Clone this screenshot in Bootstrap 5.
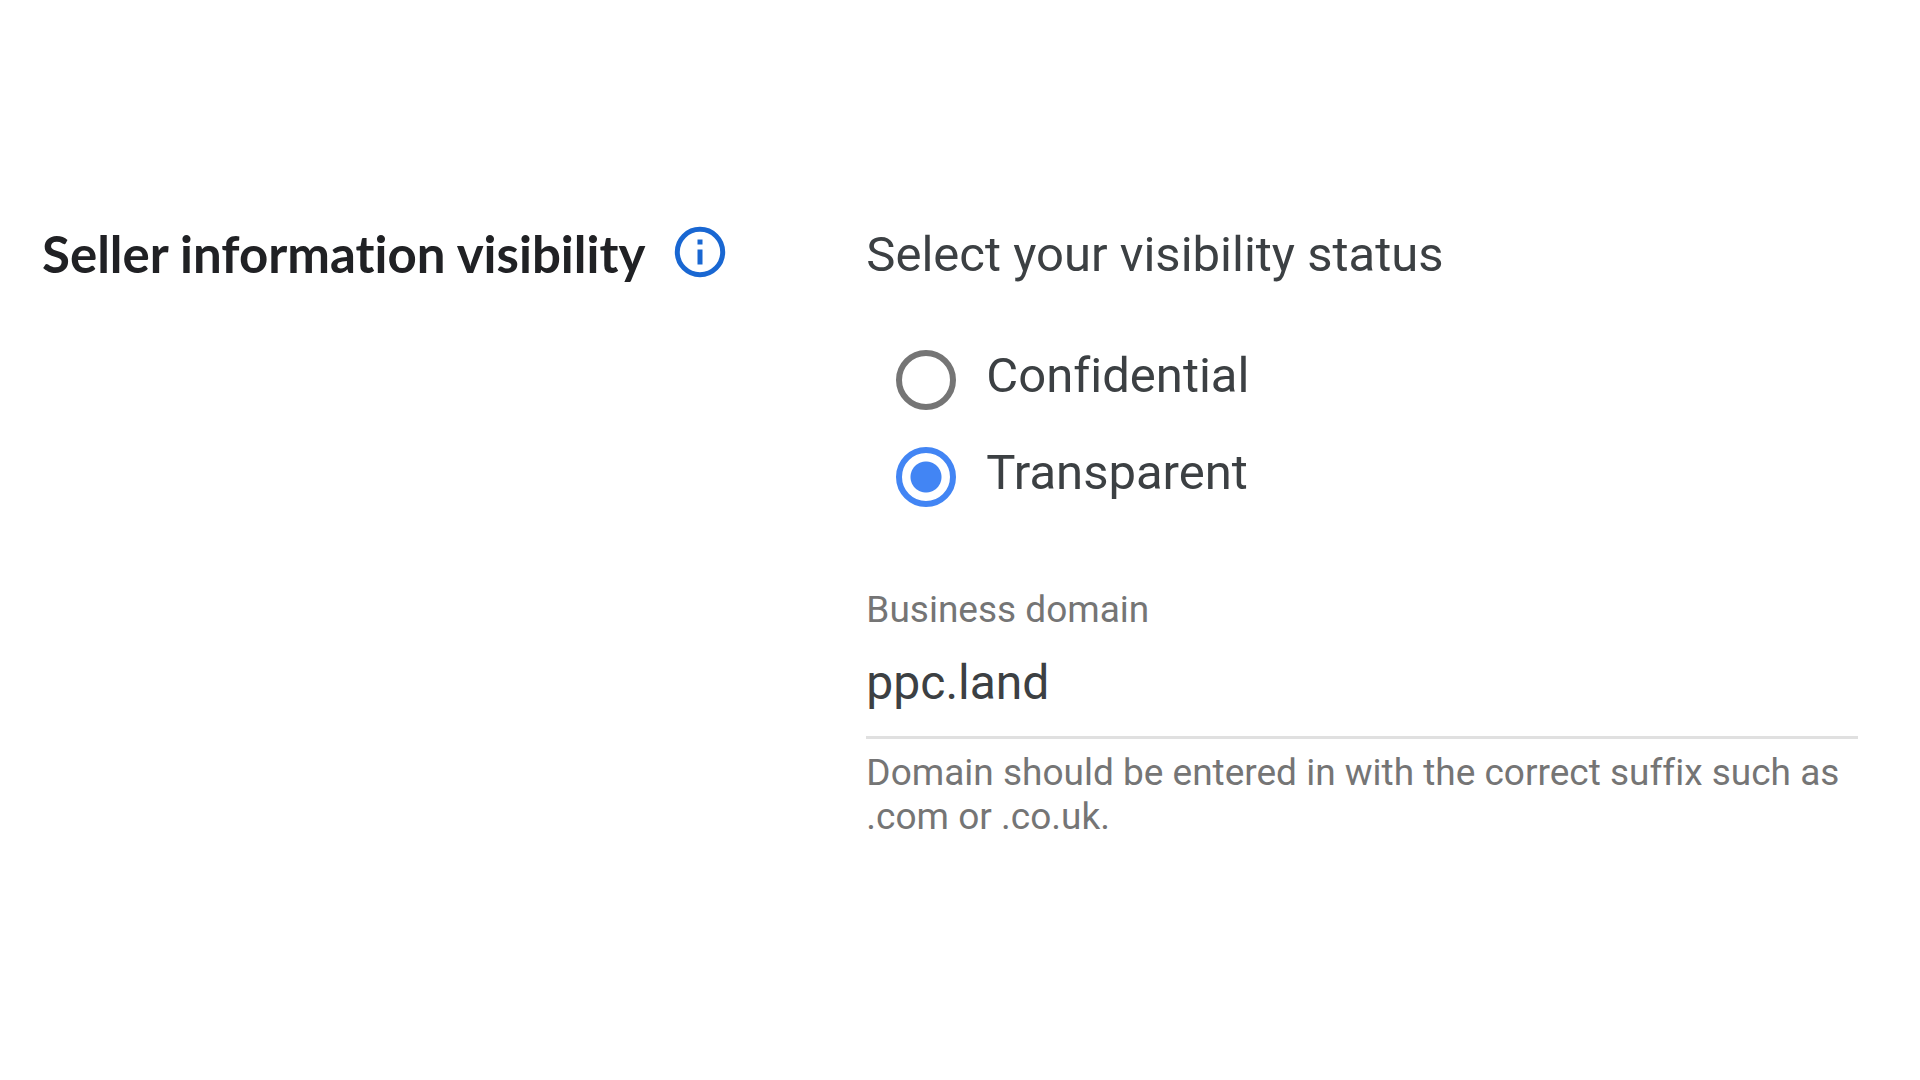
<!DOCTYPE html>
<html lang="en">
<head>
<meta charset="utf-8">
<meta name="viewport" content="width=device-width, initial-scale=1">
<title>Seller information visibility</title>
<link href="https://cdn.jsdelivr.net/npm/bootstrap@5.3.0/dist/css/bootstrap.min.css" rel="stylesheet">
<style>
  body { font-family: Roboto, "Liberation Sans", sans-serif; font-size: 49px; line-height: 60px; font-variant-ligatures: none; color: #3c4043; background: #fff; }
  .settings-row { display: grid; grid-template-columns: 5fr 6fr; padding: 224px 62px 40px 40px; }
  .settings-title { font-family: "Google Sans", Lato, sans-serif; font-size: 51px; line-height: 60px; font-weight: 700; color: #202124; }
  .title-line { gap: 27px; padding-left: 2px; }
  .info-btn { color: #1967d2; line-height: 0; }
  .status-legend { font-size: 49px; line-height: 62px; }
  .status-list { padding: 60px 0 0 30px; gap: 33px; }
  .status-option { gap: 30px; }
  .status-option .form-check-input { width: 60px; height: 60px; border: 6px solid #757575; margin: 4px 0 0; background-color: #fff; }
  .status-option .form-check-input:checked { border-color: #4285f4; background-color: #fff; background-image: radial-gradient(circle, #4285f4 15px, transparent 16px); background-size: auto; }
  .domain-field { padding-top: 81px; }
  .domain-label, .domain-help { font-size: 37px; line-height: 44px; color: #757575; }
  .domain-input { font-size: 48px; line-height: 60px; color: #3c4043; border-bottom: 3px solid #e0e0e0; padding: 20px 0 24px; height: 107px; }
  .domain-input:focus { box-shadow: none; color: #3c4043; border-color: #4285f4; }
  .domain-help { margin: 12px 0 0; }
  @media (max-width: 1199px) { .settings-row { grid-template-columns: 1fr; gap: 40px; padding: 40px; } }
</style>
<script src="https://cdn.jsdelivr.net/npm/bootstrap@5.3.0/dist/js/bootstrap.bundle.min.js"></script>
</head>
<body>
<main class="settings-row">
  <div class="title-line d-flex align-items-start">
    <h1 class="settings-title mb-0">Seller information visibility</h1>
    <button type="button" class="info-btn btn p-0 border-0" aria-label="About seller information visibility">
      <svg width="56" height="56" viewBox="0 0 56 56" fill="none" aria-hidden="true">
        <circle cx="28" cy="28" r="22.7" stroke="currentColor" stroke-width="5"/>
        <path d="M25.5 15.5h5v5h-5zM25.5 25.5h5v15h-5z" fill="currentColor"/>
      </svg>
    </button>
  </div>
  <form>
    <fieldset>
      <legend class="status-legend mb-0">Select your visibility status</legend>
      <div class="status-list d-flex flex-column">
        <div class="status-option d-flex align-items-start">
          <input class="form-check-input flex-shrink-0" type="radio" name="status" id="confidential">
          <label for="confidential">Confidential</label>
        </div>
        <div class="status-option d-flex align-items-start">
          <input class="form-check-input flex-shrink-0" type="radio" name="status" id="transparent" checked>
          <label for="transparent">Transparent</label>
        </div>
      </div>
    </fieldset>
    <div class="domain-field">
      <label class="domain-label d-block" for="domain">Business domain</label>
      <input class="domain-input form-control border-top-0 border-start-0 border-end-0 rounded-0" type="text" id="domain" value="ppc.land" aria-describedby="domain-help">
      <p class="domain-help" id="domain-help">Domain should be entered in with the correct suffix such as .com or .co.uk.</p>
    </div>
  </form>
</main>
</body>
</html>
